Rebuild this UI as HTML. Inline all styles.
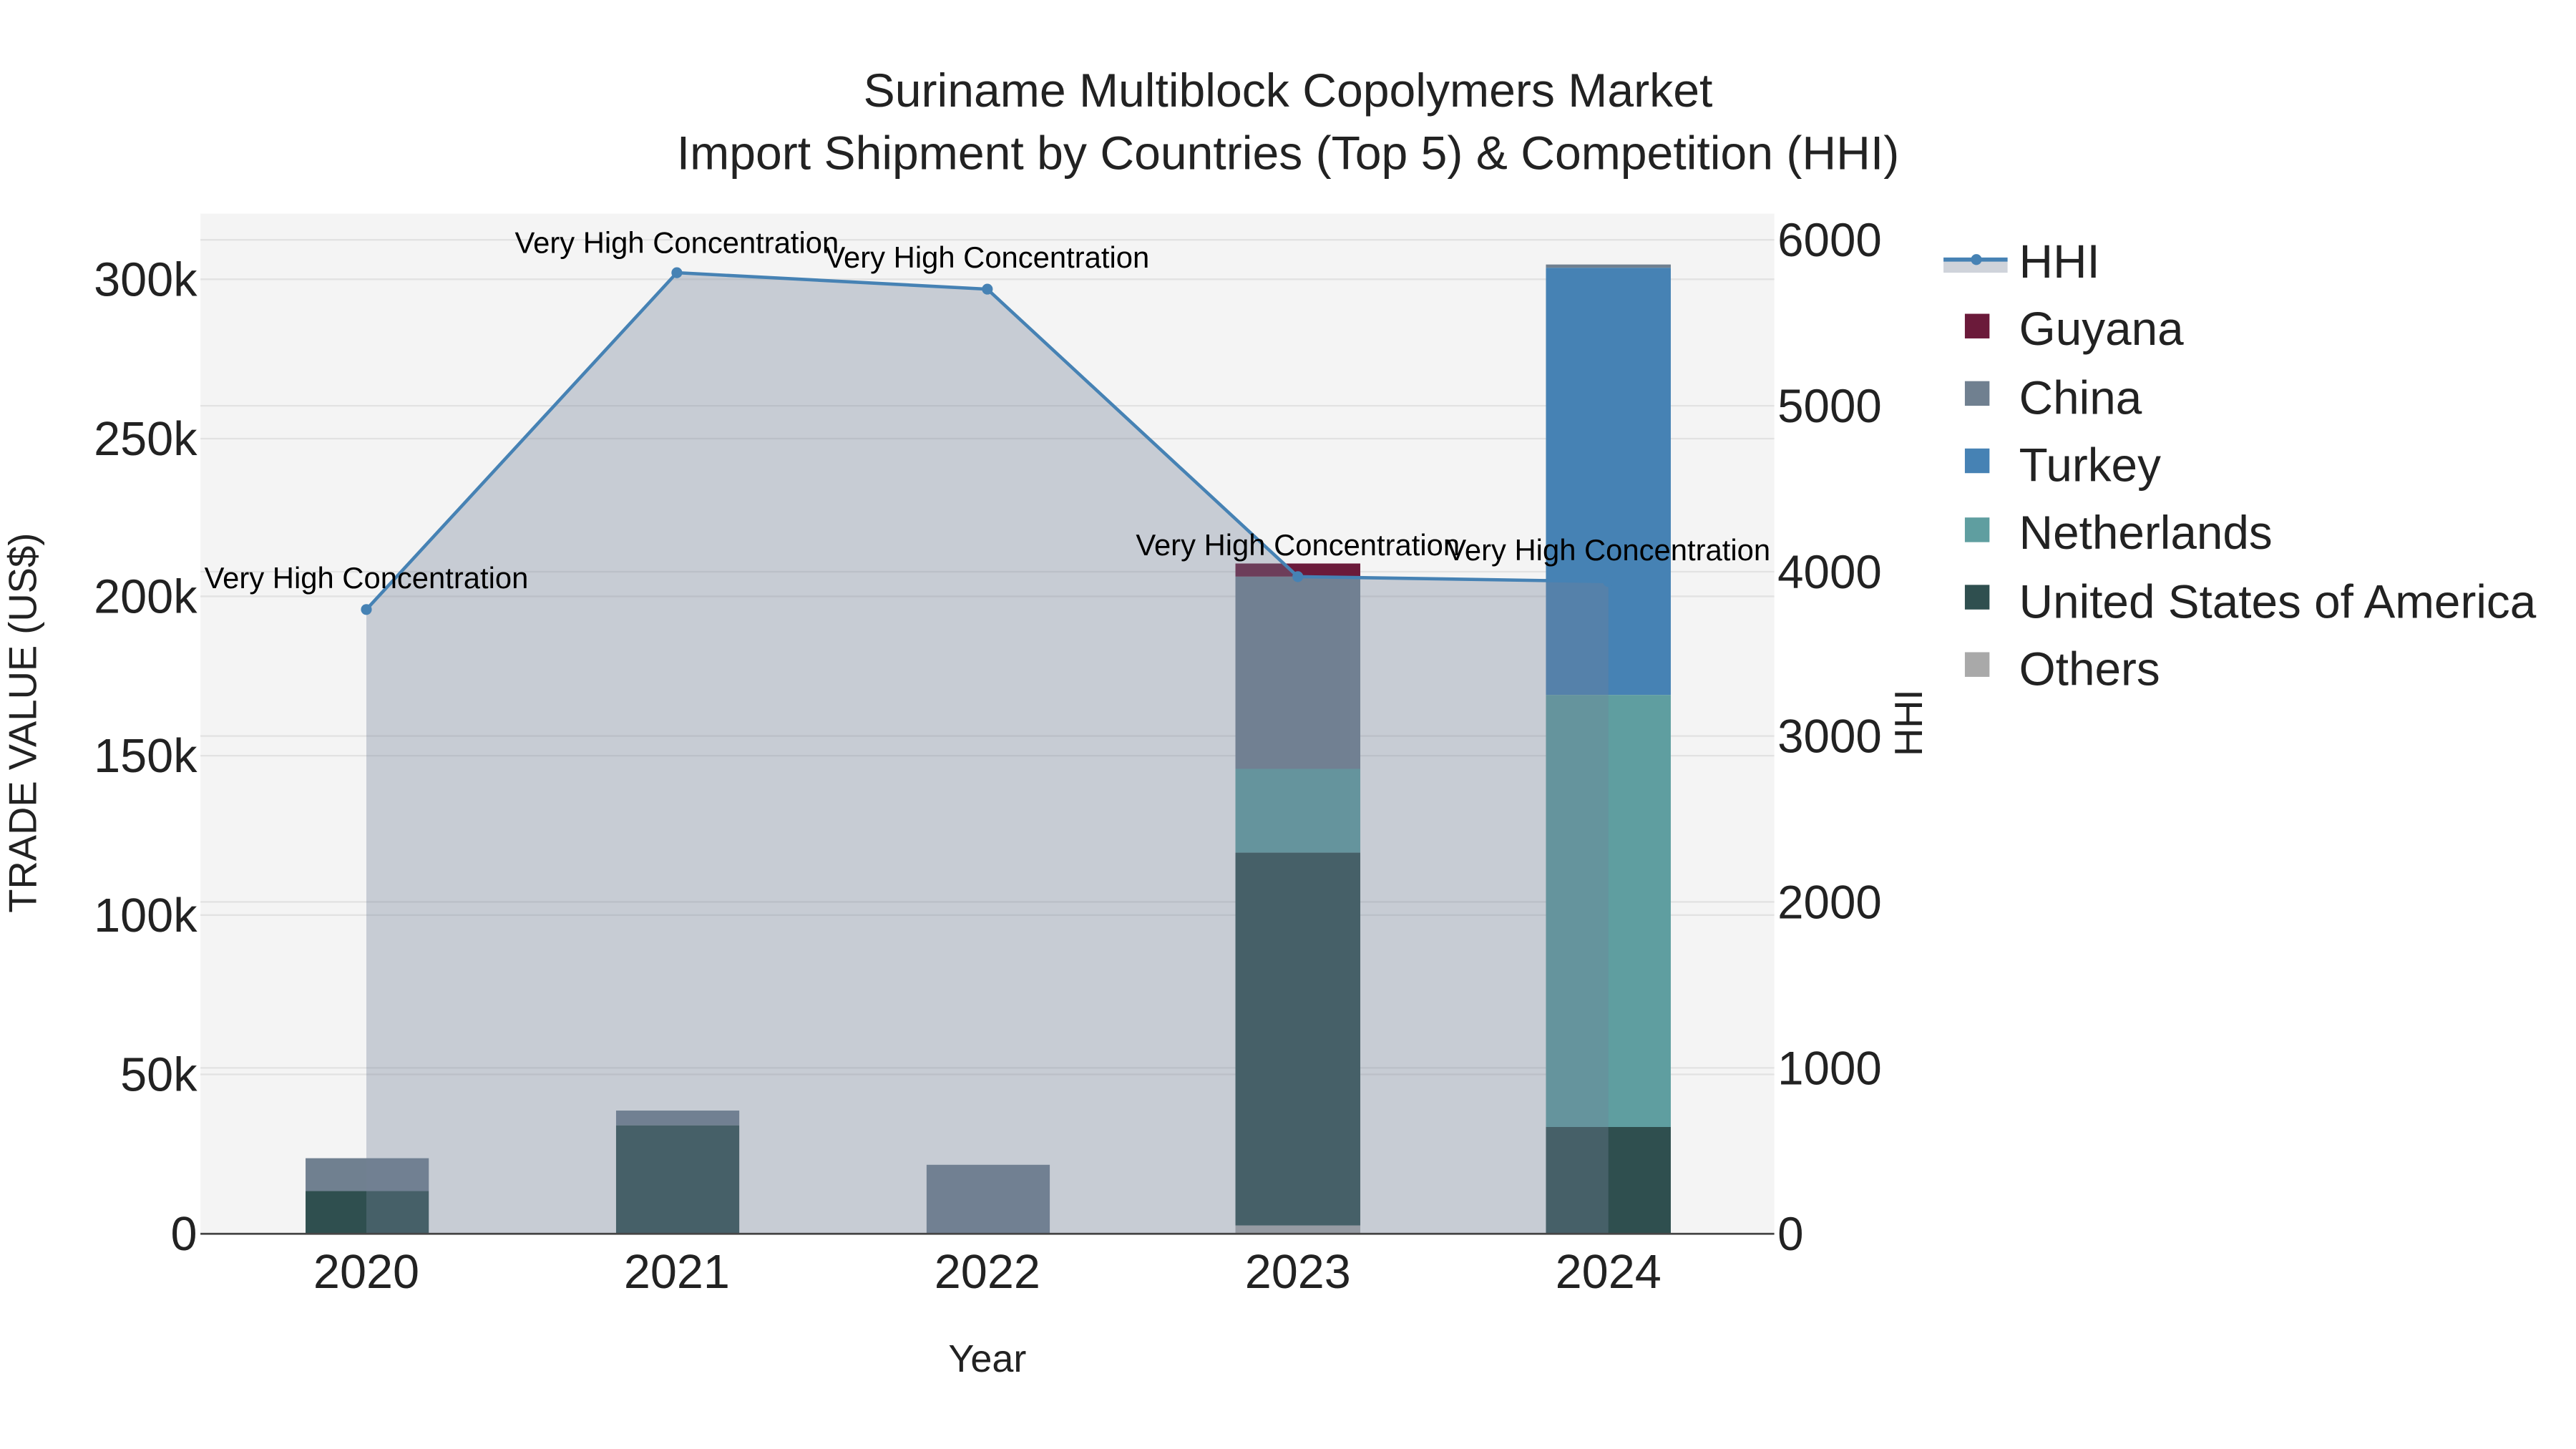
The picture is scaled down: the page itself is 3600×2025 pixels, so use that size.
<!DOCTYPE html>
<html><head><meta charset="utf-8"><style>
html,body{margin:0;padding:0;background:#fff;}
svg{display:block;font-family:"Liberation Sans",sans-serif;}
</style></head><body>
<svg width="3600" height="2025" viewBox="0 0 1568 882" xmlns="http://www.w3.org/2000/svg">
<rect x="0" y="0" width="1568" height="882" fill="#fff"/>
<rect x="122" y="130" width="958" height="621" fill="#f4f4f4"/>
<g stroke="#e2e2e2" stroke-width="1">
<line x1="122" x2="1080" y1="654" y2="654"/><line x1="122" x2="1080" y1="557" y2="557"/>
<line x1="122" x2="1080" y1="460" y2="460"/><line x1="122" x2="1080" y1="363" y2="363"/>
<line x1="122" x2="1080" y1="267" y2="267"/><line x1="122" x2="1080" y1="170" y2="170"/>
<line x1="122" x2="1080" y1="650" y2="650"/><line x1="122" x2="1080" y1="549" y2="549"/>
<line x1="122" x2="1080" y1="448" y2="448"/><line x1="122" x2="1080" y1="348" y2="348"/>
<line x1="122" x2="1080" y1="247" y2="247"/><line x1="122" x2="1080" y1="146" y2="146"/>
</g>
<rect x="186" y="705" width="75" height="20" fill="#708090"/>
<rect x="186" y="725" width="75" height="26" fill="#2f4f4f"/>
<rect x="375" y="676" width="75" height="9" fill="#708090"/>
<rect x="375" y="685" width="75" height="66" fill="#2f4f4f"/>
<rect x="564" y="709" width="75" height="42" fill="#708090"/>
<rect x="752" y="343" width="76" height="8" fill="#6b1a3a"/>
<rect x="752" y="351" width="76" height="117" fill="#708090"/>
<rect x="752" y="468" width="76" height="51" fill="#5f9ea0"/>
<rect x="752" y="519" width="76" height="227" fill="#2f4f4f"/>
<rect x="752" y="746" width="76" height="5" fill="#a9a9a9"/>
<rect x="941" y="161" width="76" height="2" fill="#708090"/>
<rect x="941" y="163" width="76" height="260" fill="#4682b4"/>
<rect x="941" y="423" width="76" height="263" fill="#5f9ea0"/>
<rect x="941" y="686" width="76" height="65" fill="#2f4f4f"/>
<polygon points="223,751 223,371 412,166 601,176 790,351 979,355 979,751" fill="rgb(116,130,152)" fill-opacity="0.35"/>
<polyline points="223,371 412,166 601,176 790,351 979,354" fill="none" stroke="#4682b4" stroke-width="2"/>
<g fill="#4682b4"><circle cx="223" cy="371" r="3.3"/><circle cx="412" cy="166" r="3.3"/><circle cx="601" cy="176" r="3.3"/><circle cx="790" cy="351" r="3.3"/><circle cx="979" cy="354" r="3.3"/></g>
<line x1="122" x2="1080" y1="751" y2="751" stroke="#444" stroke-width="1.2"/>
<g font-size="18.2" text-anchor="middle" fill="#000">
<text x="223" y="358">Very High Concentration</text>
<text x="412" y="154">Very High Concentration</text>
<text x="601" y="163">Very High Concentration</text>
<text x="790" y="338">Very High Concentration</text>
<text x="979" y="341">Very High Concentration</text>
</g>
<g font-size="28.8" text-anchor="middle" fill="#222">
<text x="784" y="65">Suriname Multiblock Copolymers Market</text>
<text x="784" y="103">Import Shipment by Countries (Top 5) &amp; Competition (HHI)</text>
</g>
<g font-size="29" text-anchor="end" fill="#222">
<text x="120" y="761">0</text><text x="120" y="664">50k</text><text x="120" y="567">100k</text>
<text x="120" y="470">150k</text><text x="120" y="373">200k</text><text x="120" y="277">250k</text><text x="120" y="180">300k</text>
</g>
<g font-size="28.5" text-anchor="start" fill="#222">
<text x="1082" y="761">0</text><text x="1082" y="660">1000</text><text x="1082" y="559">2000</text>
<text x="1082" y="458">3000</text><text x="1082" y="358">4000</text><text x="1082" y="257">5000</text><text x="1082" y="156">6000</text>
</g>
<g font-size="29" text-anchor="middle" fill="#222">
<text x="223" y="784">2020</text><text x="412" y="784">2021</text><text x="601" y="784">2022</text><text x="790" y="784">2023</text><text x="979" y="784">2024</text>
</g>
<text x="601" y="835" font-size="23.5" text-anchor="middle" fill="#222">Year</text>
<text transform="translate(22,440) rotate(-90)" font-size="23.7" text-anchor="middle" fill="#222">TRADE VALUE (US$)</text>
<text transform="translate(1170,440) rotate(-90)" font-size="23.7" text-anchor="middle" fill="#222">HHI</text>
<rect x="1183" y="159" width="39" height="7" fill="#cfd3da"/>
<line x1="1183" x2="1222" y1="158" y2="158" stroke="#4682b4" stroke-width="2.5"/>
<circle cx="1203" cy="158" r="3.3" fill="#4682b4"/>
<rect x="1196" y="191" width="15" height="15" fill="#6b1a3a"/>
<rect x="1196" y="232" width="15" height="15" fill="#708090"/>
<rect x="1196" y="273" width="15" height="15" fill="#4682b4"/>
<rect x="1196" y="315" width="15" height="15" fill="#5f9ea0"/>
<rect x="1196" y="356" width="15" height="15" fill="#2f4f4f"/>
<rect x="1196" y="397" width="15" height="15" fill="#a9a9a9"/>
<g font-size="28.6" fill="#222">
<text x="1229" y="169">HHI</text><text x="1229" y="210">Guyana</text><text x="1229" y="252">China</text>
<text x="1229" y="293">Turkey</text><text x="1229" y="334">Netherlands</text><text x="1229" y="376">United States of America</text><text x="1229" y="417">Others</text>
</g>
</svg>
</body></html>
